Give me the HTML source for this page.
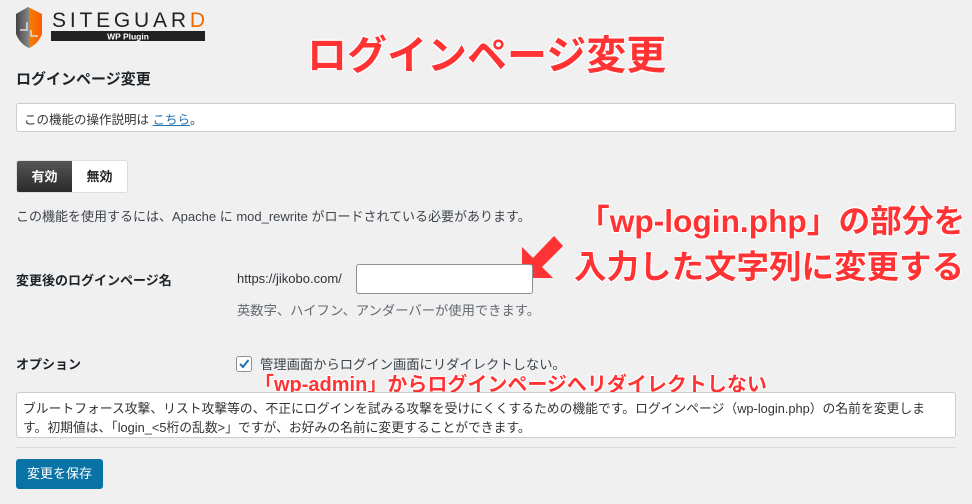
<!DOCTYPE html>
<html><head><meta charset="utf-8"><style>
body{margin:0;width:972px;height:504px;background:#f0f0f1;position:relative;overflow:hidden;font-family:"Liberation Sans","Noto Sans CJK JP",sans-serif;color:#1d2327;}
.a{position:absolute;white-space:nowrap;}
.red{color:#ff3333;font-weight:bold;text-shadow:0 0 2px #fff,0 0 2px #fff,1px 1px 0 #fff,-1px -1px 0 #fff,1px -1px 0 #fff,-1px 1px 0 #fff;}
</style></head><body>
<svg class="a" style="left:14px;top:6px" width="195" height="44" viewBox="0 0 195 44">
<defs><linearGradient id="g" x1="0" x2="1"><stop offset="0" stop-color="#444"/><stop offset="0.5" stop-color="#888"/><stop offset="0.5" stop-color="#f08000"/><stop offset="1" stop-color="#ff5a00"/></linearGradient></defs>
<path d="M2 8 L14 1 L28 8 L28 28 Q24 38 15 42 Q6 38 2 28 Z" fill="url(#g)"/>
<path d="M6 24 L13 24 L13 16 M17 24 L17 30 L24 30" stroke="#ddd" stroke-width="1.5" fill="none"/>
<text x="38" y="21" font-family="Liberation Sans" font-size="21" fill="#222" textLength="153" lengthAdjust="spacing">SITEGUAR<tspan fill="#f06a00">D</tspan></text>
<rect x="37" y="25" width="154" height="10" fill="#222"/>
<text x="114" y="33.5" font-family="Liberation Sans" font-size="8.5" font-weight="bold" fill="#fff" text-anchor="middle">WP Plugin</text>
</svg>
<div class="a red" style="left:307px;top:23px;font-size:40px;">ログインページ変更</div>
<div class="a" style="left:16px;top:68px;font-size:15px;font-weight:bold;">ログインページ変更</div>
<div class="a" style="left:16px;top:103px;width:938px;height:27px;background:#fff;border:1px solid #ccc;border-radius:3px;"></div>
<div class="a" style="left:24px;top:109px;font-size:12.5px;color:#333;">この機能の操作説明は <span style="color:#2271b1;text-decoration:underline">こちら</span>。</div>
<div class="a" style="left:16px;top:160px;width:110px;height:31px;border:1px solid #ddd;border-radius:3px;background:#fff;overflow:hidden;">
<div style="position:absolute;left:0;top:0;width:55px;height:31px;background:linear-gradient(#555,#2a2a2a);color:#fff;font-size:13px;font-weight:bold;line-height:31px;text-align:center;">有効</div>
<div style="position:absolute;left:55px;top:0;width:55px;height:31px;color:#222;font-size:13px;font-weight:bold;line-height:31px;text-align:center;">無効</div></div>
<div class="a" style="left:16px;top:206px;font-size:13px;color:#3c434a;">この機能を使用するには、Apache に mod_rewrite がロードされている必要があります。</div>
<div class="a red" style="left:578px;top:196px;font-size:31.7px;">「wp-login.php」の部分を</div>
<div class="a red" style="left:574px;top:241px;font-size:32.5px;">入力した文字列に変更する</div>
<svg class="a" style="left:520px;top:234px" width="45" height="48" viewBox="0 0 45 48"><path d="M34 2 L43 12 L22 33 L33 44 L2 44 L2 13 L13 24 Z" fill="#ff3333"/></svg>
<div class="a" style="left:16px;top:270px;font-size:13px;font-weight:bold;">変更後のログインページ名</div>
<div class="a" style="left:237px;top:271px;font-size:13px;color:#2c3338;">https://jikobo.com/</div>
<div class="a" style="left:356px;top:264px;width:175px;height:28px;background:#fff;border:1px solid #8c8f94;border-radius:3px;"></div>
<div class="a" style="left:237px;top:300px;font-size:13.3px;color:#646970;">英数字、ハイフン、アンダーバーが使用できます。</div>
<div class="a" style="left:16px;top:354px;font-size:13px;font-weight:bold;">オプション</div>
<div class="a" style="left:236px;top:356px;width:14px;height:14px;background:#fff;border:1px solid #8c8f94;border-radius:3px;"></div>
<svg class="a" style="left:237px;top:357px" width="14" height="14" viewBox="0 0 14 14"><path d="M3 7 L6 10 L11.5 3" stroke="#2271b1" stroke-width="2" fill="none"/></svg>
<div class="a" style="left:260px;top:354px;font-size:13.3px;color:#3c434a;">管理画面からログイン画面にリダイレクトしない。</div>
<div class="a red" style="left:254px;top:368px;font-size:20px;">「wp-admin」からログインページへリダイレクトしない</div>
<div class="a" style="left:16px;top:392px;width:938px;height:44px;background:#fff;border:1px solid #ccc;border-radius:3px;"></div>
<div class="a" style="left:23px;top:399px;font-size:12.8px;line-height:19px;color:#333;white-space:normal;width:925px;">ブルートフォース攻撃、リスト攻撃等の、不正にログインを試みる攻撃を受けにくくするための機能です。ログインページ（wp-login.php）の名前を変更します。初期値は、「login_&lt;5桁の乱数&gt;」ですが、お好みの名前に変更することができます。</div>
<div class="a" style="left:16px;top:447px;width:940px;height:1px;background:#dcdcde;"></div>
<div class="a" style="left:16px;top:459px;width:87px;height:30px;background:#0a73a6;border-radius:3px;color:#fff;font-size:13px;line-height:30px;text-align:center;">変更を保存</div>
</body></html>
